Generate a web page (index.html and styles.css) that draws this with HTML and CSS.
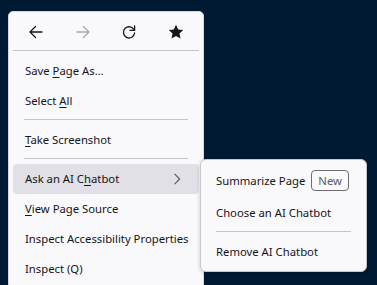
FILE: index.html
```html
<!DOCTYPE html>
<html lang="en">

<head>
    <meta charset="UTF-8">
    <meta name="viewport" content="width=device-width, initial-scale=1.0">
    <title>Context Menu</title>
    <link rel="stylesheet" href="styles.css">
</head>

<body>
    <div class="menu">
        <div class="nav-row">
            <button class="nav-button">
                <svg viewBox="0 0 16 16" fill="none" stroke="currentColor" stroke-width="1.3" stroke-linecap="round" stroke-linejoin="round">
                    <path d="M14 8H2M7.5 2.5L2 8l5.5 5.5" />
                </svg>
            </button>
            <button class="nav-button disabled">
                <svg viewBox="0 0 16 16" fill="none" stroke="currentColor" stroke-width="1.3" stroke-linecap="round" stroke-linejoin="round">
                    <path d="M2 8h12M8.5 2.5L14 8l-5.5 5.5" />
                </svg>
            </button>
            <button class="nav-button">
                <svg viewBox="0 0 16 16" fill="none" stroke="currentColor" stroke-width="1.3" stroke-linecap="round" stroke-linejoin="round">
                    <path d="M13.2 6.2A5.6 5.6 0 1 0 13.6 9" />
                    <path d="M13.6 1.8v4.6H9" />
                </svg>
            </button>
            <button class="nav-button">
                <svg viewBox="0 0 16 16" fill="currentColor">
                    <path d="M8 0.8l2.2 4.6 5 0.6-3.7 3.5 1 5-4.5-2.5-4.5 2.5 1-5L0.8 6l5-0.6z" />
                </svg>
            </button>
        </div>
        <div class="separator full"></div>

        <div class="menu-item"><span>Save <u>P</u>age As…</span></div>
        <div class="menu-item"><span>Select <u>A</u>ll</span></div>
        <div class="separator"></div>
        <div class="menu-item"><span><u>T</u>ake Screenshot</span></div>
        <div class="separator"></div>
        <div class="menu-item active">
            <span>Ask an AI C<u>h</u>atbot</span>
            <svg class="chevron" viewBox="0 0 16 16" fill="none" stroke="currentColor" stroke-width="1.3" stroke-linecap="round" stroke-linejoin="round">
                <path d="M5.5 2.5L11 8l-5.5 5.5" />
            </svg>
        </div>
        <div class="menu-item"><span><u>V</u>iew Page Source</span></div>
        <div class="menu-item"><span>Inspect Accessibility Properties</span></div>
        <div class="menu-item"><span>Inspect (Q)</span></div>

        <div class="submenu">
            <div class="menu-item first">
                <span>Summarize Page</span>
                <span class="badge">New</span>
            </div>
            <div class="menu-item"><span>Choose an AI Chatbot</span></div>
            <div class="separator"></div>
            <div class="menu-item"><span>Remove AI Chatbot</span></div>
        </div>
    </div>
</body>

</html>
```

FILE: styles.css
```css
* {
    margin: 0;
    padding: 0;
    box-sizing: border-box;
}

body {
    background-color: #001a33;
    color: #15141a;
    font-family: "Noto Sans", "DejaVu Sans", sans-serif;
    font-size: 11.3px;
    height: 100vh;
    overflow: hidden;
    padding: 11px 0 0 8px;
}

.menu {
    position: relative;
    width: 196px;
    background: #f9f9fb;
    border: 1px solid #d8d8dc;
    border-radius: 5px;
    padding: 4px 4px;
}

.nav-row {
    display: grid;
    grid-template-columns: repeat(4, 1fr);
    height: 32px;
    align-items: center;
}

.nav-button {
    background: none;
    border: none;
    color: #15141a;
    display: flex;
    justify-content: center;
    align-items: center;
}

.nav-button.disabled {
    color: #a9a9ad;
}

.nav-button svg {
    width: 16px;
    height: 16px;
}

.separator {
    height: 1px;
    background: #c4c4c8;
    margin: 3px 11px 5px;
}

.separator.full {
    margin: 2px 0 5px;
}

.menu-item {
    height: 30px;
    display: flex;
    align-items: center;
    gap: 6px;
    padding: 0 12px 1px;
    border-radius: 4px;
    white-space: nowrap;
}

.menu-item u {
    text-underline-offset: 2px;
}

.menu-item.active {
    background: #e0e0e6;
    justify-content: space-between;
}

.chevron {
    width: 14px;
    height: 14px;
    color: #5b5b66;
    margin-right: 3px;
}

.submenu {
    position: absolute;
    left: 191px;
    top: 147px;
    width: 167px;
    background: #f9f9fb;
    border: 1px solid #c8c8cc;
    border-radius: 6px;
    padding: 4px 4px;
    box-shadow: 0 1px 4px rgba(0, 0, 0, 0.2);
}

.submenu .menu-item {
    padding: 0 11px 1px;
}

.submenu .menu-item.first {
    height: 34px;
}

.badge {
    border: 1px solid #6c6c72;
    border-radius: 4px;
    color: #5b5b66;
    padding: 1px 6px;
    line-height: 17px;
}
```
